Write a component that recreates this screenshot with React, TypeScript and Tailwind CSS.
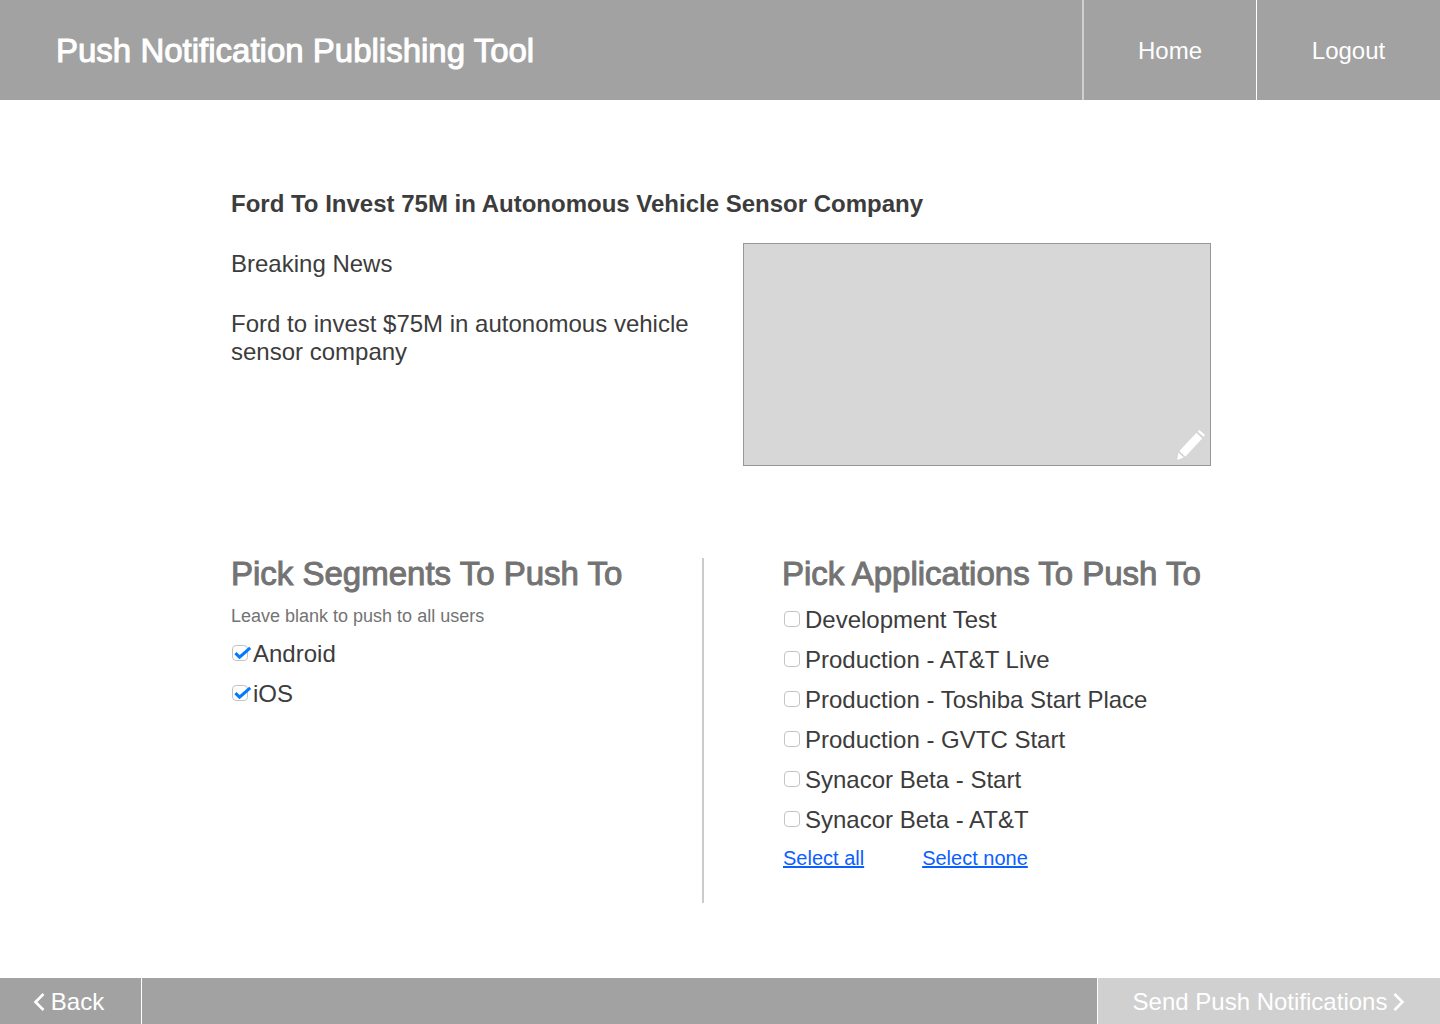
import { useState } from "react";

const SEGMENTS = ["Android", "iOS"];

const APPLICATIONS = [
  "Development Test",
  "Production - AT&T Live",
  "Production - Toshiba Start Place",
  "Production - GVTC Start",
  "Synacor Beta - Start",
  "Synacor Beta - AT&T",
];

function toggle(list: string[], item: string) {
  return list.includes(item) ? list.filter((i) => i !== item) : [...list, item];
}

function CheckRow({
  label,
  checked,
  onToggle,
}: {
  label: string;
  checked: boolean;
  onToggle: () => void;
}) {
  return (
    <li>
      <label className="flex h-10 cursor-pointer items-center gap-[5px] text-2xl leading-7">
        <span className="relative mb-0.5 size-4 shrink-0">
          <input
            type="checkbox"
            checked={checked}
            onChange={onToggle}
            className="block size-4 appearance-none rounded border border-[#c4c4c4] bg-white"
          />
          {checked && (
            <svg
              viewBox="0 0 20 16"
              className="pointer-events-none absolute top-0 left-0 h-4 w-5"
              fill="none"
              stroke="#007aff"
              strokeWidth="3"
              aria-hidden="true"
            >
              <path d="M3.4 8.2 7.6 12.2 18.2 2.8" />
            </svg>
          )}
        </span>
        {label}
      </label>
    </li>
  );
}

function PencilIcon() {
  return (
    <svg viewBox="0 0 30 32" className="h-8 w-[30px]" fill="#fff" stroke="#c4c4c4" strokeWidth="0.4" aria-hidden="true">
      <path d="M23.3 0.4 29.4 6 27.5 8.2 21.4 2.5Z" />
      <path d="M20.4 3.6 26.6 9.4 9.4 28 3 22Z" />
      <path d="M2.2 23 8.2 28.8 0.7 31.6Z" />
    </svg>
  );
}

function Chevron({ d }: { d: string }) {
  return (
    <svg viewBox="0 0 12 18" className="h-[18px] w-3 shrink-0" fill="none" stroke="currentColor" strokeWidth="2.6" aria-hidden="true">
      <path d={d} />
    </svg>
  );
}

export default function App() {
  const [segments, setSegments] = useState<string[]>(SEGMENTS);
  const [applications, setApplications] = useState<string[]>([]);

  return (
    <div className="flex min-h-screen flex-col bg-white font-['Liberation_Sans',Arial,sans-serif] text-[#3c3c3c]">
      <header className="flex h-[100px] items-stretch bg-[#a2a2a2] text-white">
        <h1 className="flex flex-1 items-center pt-0.5 pl-14 text-[33px] leading-8 [-webkit-text-stroke:1px]">
          Push Notification Publishing Tool
        </h1>
        <nav className="flex text-2xl leading-7">
          <a href="#home" className="flex w-[174px] items-center justify-center border-l-2 border-[#d0d0d0] pt-0.5">
            Home
          </a>
          <a href="#logout" className="flex w-[184px] items-center justify-center border-l border-white pt-0.5">
            Logout
          </a>
        </nav>
      </header>

      <main className="mx-auto w-full max-w-[982px] flex-1 pt-[90px] pb-[75px]">
        <h2 className="pl-0.5 text-2xl leading-7 font-bold">
          Ford To Invest 75M in Autonomous Vehicle Sensor Company
        </h2>
        <section className="mt-[25px] flex justify-between gap-8">
          <div className="flex flex-1 flex-col gap-8 pt-[7px] pl-0.5 text-2xl leading-7">
            <p>Breaking News</p>
            <p>Ford to invest $75M in autonomous vehicle sensor company</p>
          </div>
          <div className="flex h-[223px] w-[468px] shrink-0 items-end justify-end border border-[#979797] bg-[#d7d7d7] p-1">
            <button type="button" aria-label="Edit image">
              <PencilIcon />
            </button>
          </div>
        </section>

        <div className="mt-[92px] flex min-h-[345px]">
          <section className="flex-1 border-r-2 border-[#cbcbcb] pl-0.5">
            <h2 className="text-[33px] leading-8 text-[#737373] [-webkit-text-stroke:1px]">
              Pick Segments To Push To
            </h2>
            <p className="mt-3 text-lg leading-7 text-[#737373]">
              Leave blank to push to all users
            </p>
            <ul className="mt-1 pl-px">
              {SEGMENTS.map((s) => (
                <CheckRow
                  key={s}
                  label={s}
                  checked={segments.includes(s)}
                  onToggle={() => setSegments(toggle(segments, s))}
                />
              ))}
            </ul>
          </section>
          <section className="ml-[78px] w-[429px]">
            <h2 className="text-[33px] leading-8 whitespace-nowrap text-[#737373] [-webkit-text-stroke:1px]">
              Pick Applications To Push To
            </h2>
            <ul className="mt-[10px] pl-0.5">
              {APPLICATIONS.map((a) => (
                <CheckRow
                  key={a}
                  label={a}
                  checked={applications.includes(a)}
                  onToggle={() => setApplications(toggle(applications, a))}
                />
              ))}
            </ul>
            <div className="mt-1 flex gap-[58px] pl-px text-xl leading-7 text-[#0a60ff]">
              <button type="button" className="underline" onClick={() => setApplications(APPLICATIONS)}>
                Select all
              </button>
              <button type="button" className="underline" onClick={() => setApplications([])}>
                Select none
              </button>
            </div>
          </section>
        </div>
      </main>

      <footer className="flex h-[46px] justify-between bg-[#a2a2a2] text-2xl leading-7 text-white">
        <button type="button" className="flex w-[142px] items-center justify-center gap-1.5 border-r border-white pt-0.5 pr-1">
          <Chevron d="M10.5 1 2.5 9 10.5 17" />
          Back
        </button>
        <button
          type="button"
          disabled={applications.length === 0}
          className="flex w-[343px] items-center justify-center gap-1.5 border-l border-white pt-0.5 disabled:bg-[#d0d0d0]"
        >
          Send Push Notifications
          <Chevron d="M1.5 1 9.5 9 1.5 17" />
        </button>
      </footer>
    </div>
  );
}
